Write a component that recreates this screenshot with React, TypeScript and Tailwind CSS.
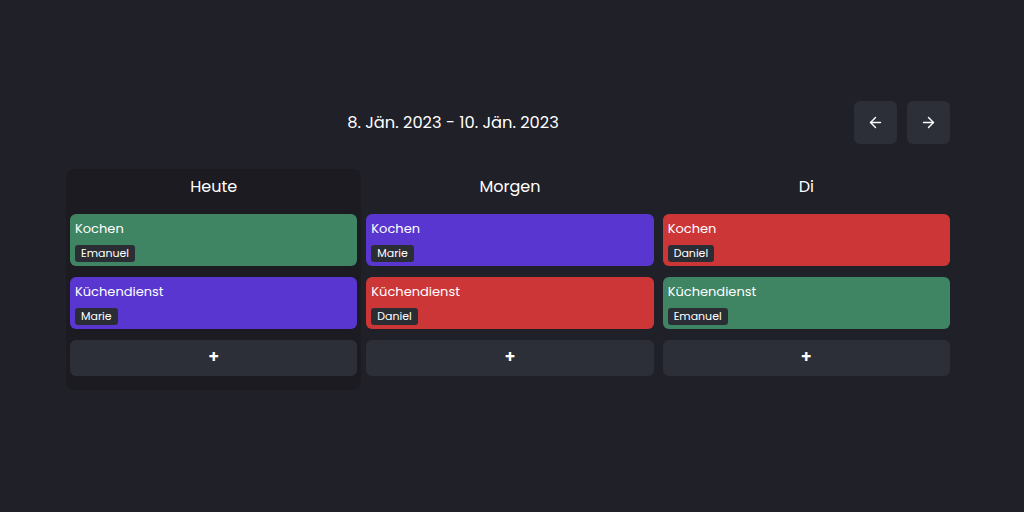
import { ArrowLeft, ArrowRight } from "lucide-react";

type Task = { title: string; person: string; color: string };
type Day = { label: string; active?: boolean; tasks: Task[] };

const GREEN = "bg-[#3f8463]";
const PURPLE = "bg-[#5936d0]";
const RED = "bg-[#cc3637]";

const days: Day[] = [
  {
    label: "Heute",
    active: true,
    tasks: [
      { title: "Kochen", person: "Emanuel", color: GREEN },
      { title: "Küchendienst", person: "Marie", color: PURPLE },
    ],
  },
  {
    label: "Morgen",
    tasks: [
      { title: "Kochen", person: "Marie", color: PURPLE },
      { title: "Küchendienst", person: "Daniel", color: RED },
    ],
  },
  {
    label: "Di",
    tasks: [
      { title: "Kochen", person: "Daniel", color: RED },
      { title: "Küchendienst", person: "Emanuel", color: GREEN },
    ],
  },
];

function TaskCard({ task }: { task: Task }) {
  return (
    <div className={`h-[52px] rounded-md px-[5px] pt-[6px] ${task.color}`}>
      <div className="text-[13px] leading-[18px] text-white">{task.title}</div>
      <div className="mt-[7px] flex">
        <span className="h-[17px] rounded-[3px] bg-[#2b2d35] px-[6px] text-[11px] leading-[17px] text-white">
          {task.person}
        </span>
      </div>
    </div>
  );
}

function DayColumn({ day }: { day: Day }) {
  return (
    <div className={`rounded-lg p-1 pb-[14px] ${day.active ? "bg-[#1b1b21]" : ""}`}>
      <div className="mb-[13px] flex h-[28px] items-center justify-center text-[16px] text-white">
        {day.label}
      </div>
      <div className="flex flex-col gap-[11px]">
        {day.tasks.map((t, i) => (
          <TaskCard key={i} task={t} />
        ))}
        <button className="flex h-[36px] items-center justify-center rounded-md bg-[#2d2f38] text-[17px] font-semibold text-white">
          +
        </button>
      </div>
    </div>
  );
}

export default function App() {
  return (
    <div
      className="h-[512px] w-[1024px] bg-[#202029] pt-[101px]"
      style={{ fontFamily: "Poppins, Inter, 'Noto Sans', sans-serif" }}
    >
      <div className="ml-[66px] flex w-[884px] items-center gap-[14px]">
        <div className="flex-1 pt-[2px] text-center text-[16.3px] text-white">8. Jän. 2023 - 10. Jän. 2023</div>
        <div className="flex gap-[10px]">
          <button className="flex h-[43px] w-[43px] items-center justify-center rounded-md bg-[#2d2f38] text-white">
            <ArrowLeft size={17} strokeWidth={2} />
          </button>
          <button className="flex h-[43px] w-[43px] items-center justify-center rounded-md bg-[#2d2f38] text-white">
            <ArrowRight size={17} strokeWidth={2} />
          </button>
        </div>
      </div>
      <div className="ml-[66px] mt-[25px] grid w-[888px] grid-cols-3 items-start gap-[1px]">
        {days.map((d) => (
          <DayColumn key={d.label} day={d} />
        ))}
      </div>
    </div>
  );
}
